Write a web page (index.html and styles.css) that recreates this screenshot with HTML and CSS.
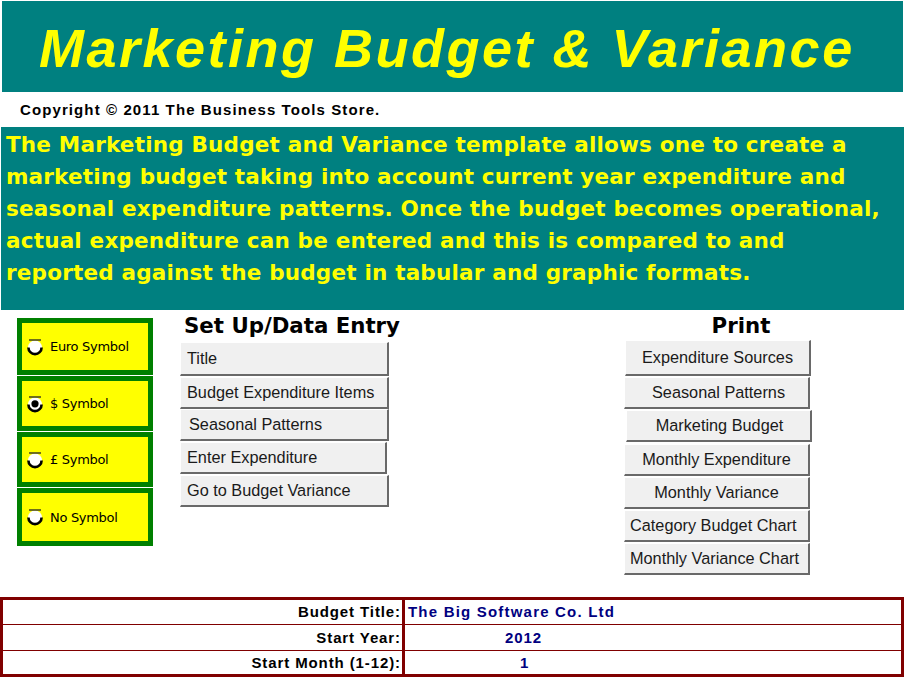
FILE: index.html
```html
<!DOCTYPE html>
<html>
<head>
<meta charset="utf-8">
<link rel="stylesheet" href="styles.css">
</head>
<body>
<div class="banner"><h1 class="title">Marketing Budget &amp; Variance</h1></div>
<div class="copyright">Copyright © 2011 The Business Tools Store.</div>
<div class="desc">
<p>The Marketing Budget and Variance template allows one to create a<br>marketing budget taking into account current year expenditure and<br>seasonal expenditure patterns. Once the budget becomes operational,<br>actual expenditure can be entered and this is compared to and<br>reported against the budget in tabular and graphic formats.</p>
</div>
<div class="main">
  <div class="radios">
    <div class="radio r1"><svg class="rico" viewBox="0 0 18 18" width="18" height="18"><circle cx="9" cy="9.5" r="7" fill="#fff"/><path d="M2.4 9.5 A6.6 6.6 0 0 0 15.6 9.5" fill="none" stroke="#000" stroke-width="2.6"/><path d="M3 2 H15" stroke="#222" stroke-width="1.3"/></svg><span>Euro Symbol</span></div>
    <div class="radio r2"><svg class="rico" viewBox="0 0 18 18" width="18" height="18"><circle cx="9" cy="9.5" r="7" fill="#fff"/><path d="M2.4 9.5 A6.6 6.6 0 0 0 15.6 9.5" fill="none" stroke="#000" stroke-width="2.6"/><path d="M3 2 H15" stroke="#222" stroke-width="1.3"/><circle cx="9" cy="8.8" r="3.6" fill="#000"/></svg><span>$ Symbol</span></div>
    <div class="radio r3"><svg class="rico" viewBox="0 0 18 18" width="18" height="18"><circle cx="9" cy="9.5" r="7" fill="#fff"/><path d="M2.4 9.5 A6.6 6.6 0 0 0 15.6 9.5" fill="none" stroke="#000" stroke-width="2.6"/><path d="M3 2 H15" stroke="#222" stroke-width="1.3"/></svg><span>£ Symbol</span></div>
    <div class="radio r4"><svg class="rico" viewBox="0 0 18 18" width="18" height="18"><circle cx="9" cy="9.5" r="7" fill="#fff"/><path d="M2.4 9.5 A6.6 6.6 0 0 0 15.6 9.5" fill="none" stroke="#000" stroke-width="2.6"/><path d="M3 2 H15" stroke="#222" stroke-width="1.3"/></svg><span>No Symbol</span></div>
  </div>
  <div class="setup">
    <h2 class="head">Set Up/Data Entry</h2>
    <div class="btns">
      <div class="btn b-title">Title</div>
      <div class="btn b-items">Budget Expenditure Items</div>
      <div class="btn b-seas">Seasonal Patterns</div>
      <div class="btn b-enter">Enter Expenditure</div>
      <div class="btn b-goto">Go to Budget Variance</div>
    </div>
  </div>
  <div class="print">
    <h2 class="head phead">Print</h2>
    <div class="btns">
      <div class="btn pb p1">Expenditure Sources</div>
      <div class="btn pb p2">Seasonal Patterns</div>
      <div class="btn pb p3">Marketing Budget</div>
      <div class="btn pb p4">Monthly Expenditure</div>
      <div class="btn pb p5">Monthly Variance</div>
      <div class="btn pb p6">Category Budget Chart</div>
      <div class="btn pb p7">Monthly Variance Chart</div>
    </div>
  </div>
</div>
<table class="info">
  <tr class="row1"><td class="lbl">Budget Title:</td><td class="val left">The Big Software Co. Ltd</td></tr>
  <tr class="row2"><td class="lbl">Start Year:</td><td class="val num">2012</td></tr>
  <tr class="row3"><td class="lbl">Start Month (1-12):</td><td class="val num num1">1</td></tr>
</table>
</body>
</html>
```
FILE: styles.css
```css
html, body { margin: 0; padding: 0; background: #fff; }
body { width: 905px; height: 679px; overflow: hidden; font-family: "Liberation Sans", Arial, sans-serif; }

.banner { background: #008080; margin: 1px 2px 0 2px; height: 91px; display: flex; align-items: center; }
.title { margin: 0 0 0 37px; color: #ffff00; font-family: "Liberation Sans", Arial, sans-serif; font-size: 54px; font-style: italic; font-weight: bold; letter-spacing: 2.5px; line-height: 1; padding-top: 2px; white-space: nowrap; }

.copyright { height: 35px; display: flex; align-items: center; padding-left: 20px; font-weight: bold; font-size: 15px; letter-spacing: 1.1px; color: #000; }

.desc { background: #008080; height: 183px; margin: 0 1px; }
.desc p { margin: 0; padding: 2px 0 0 5px; color: #ffff00; font-family: "DejaVu Sans", sans-serif; font-weight: bold; font-size: 21.5px; line-height: 32px; letter-spacing: 0.2px; white-space: nowrap; }

.main { height: 287px; display: flex; align-items: flex-start; }
.radios { margin: 8px 0 0 17px; width: 136px; display: flex; flex-direction: column; }
.radio { box-sizing: border-box; border: 5px solid #008000; background: #ffff00; display: flex; align-items: center; padding-left: 4px; font-family: "DejaVu Sans", Tahoma, sans-serif; font-size: 13px; color: #000; }
.radio span { margin-left: 6px; letter-spacing: -0.3px; }
.r1 { height: 57px; }
.r2 { height: 55px; margin-top: 1px; }
.r3 { height: 55px; margin-top: 1px; }
.r4 { height: 58px; margin-top: 1px; }
.rico { flex: none; }

.setup { margin-left: 27px; width: 220px; display: flex; flex-direction: column; }
.head { margin: 2px 0 0 4px; height: 30px; font-family: "DejaVu Sans", sans-serif; font-size: 21.3px; font-weight: bold; line-height: 28px; color: #000; letter-spacing: 0px; white-space: nowrap; }
.btns { display: flex; flex-direction: column; }
.btn { box-sizing: border-box; background: #f0f0f0; border-top: 1px solid #fff; border-left: 1px solid #fff; border-right: 2px solid #696969; border-bottom: 2px solid #696969; height: 32px; display: flex; align-items: center; padding-left: 6px; font-size: 16.3px; color: #1a1a1a; white-space: nowrap; }
.setup .btn { width: 209px; }
.b-title { height: 34px; }
.b-items { margin-top: 1px; }
.b-seas { padding-left: 8px; }
.b-enter { margin-top: 1px; width: 207px !important; }
.b-goto { margin-top: 1px; }

.print { margin-left: 224px; width: 190px; display: flex; flex-direction: column; }
.phead { margin: 2px 0 0 0; padding-left: 44px; height: 28px; text-align: center; }
.pb { width: 186px; justify-content: center; padding-left: 0; margin-top: 1px; }
.p1 { height: 36px; margin-top: 0; margin-left: 1px; }
.p2 { padding-left: 4px; }
.p3 { margin-left: 2px; padding-left: 2px; }
.p4 { margin-top: 2px; }
.p6 { justify-content: flex-start; padding-left: 5px; }
.p7 { justify-content: flex-start; padding-left: 5px; }

.info { border-collapse: collapse; width: 904px; margin-top: 0; border: 3px solid #800000; }
.info td { border-top: 1px solid #800000; padding: 0 4px; font-weight: bold; font-size: 15px; letter-spacing: 0.9px; line-height: 18px; }
.row1 td { height: 24px; border-top: none; }
.row2 td { height: 25px; }
.row3 td { height: 23px; }
.lbl { width: 394px; text-align: right; border-right: 3px solid #800000; color: #000; padding-right: 1px !important; }
.val { color: #000080; }
.val.left { text-align: left; padding-left: 3px; letter-spacing: 1.2px; }
.val.num { text-align: left; padding-left: 100px; }
.val.num1 { padding-left: 115px; }
```
